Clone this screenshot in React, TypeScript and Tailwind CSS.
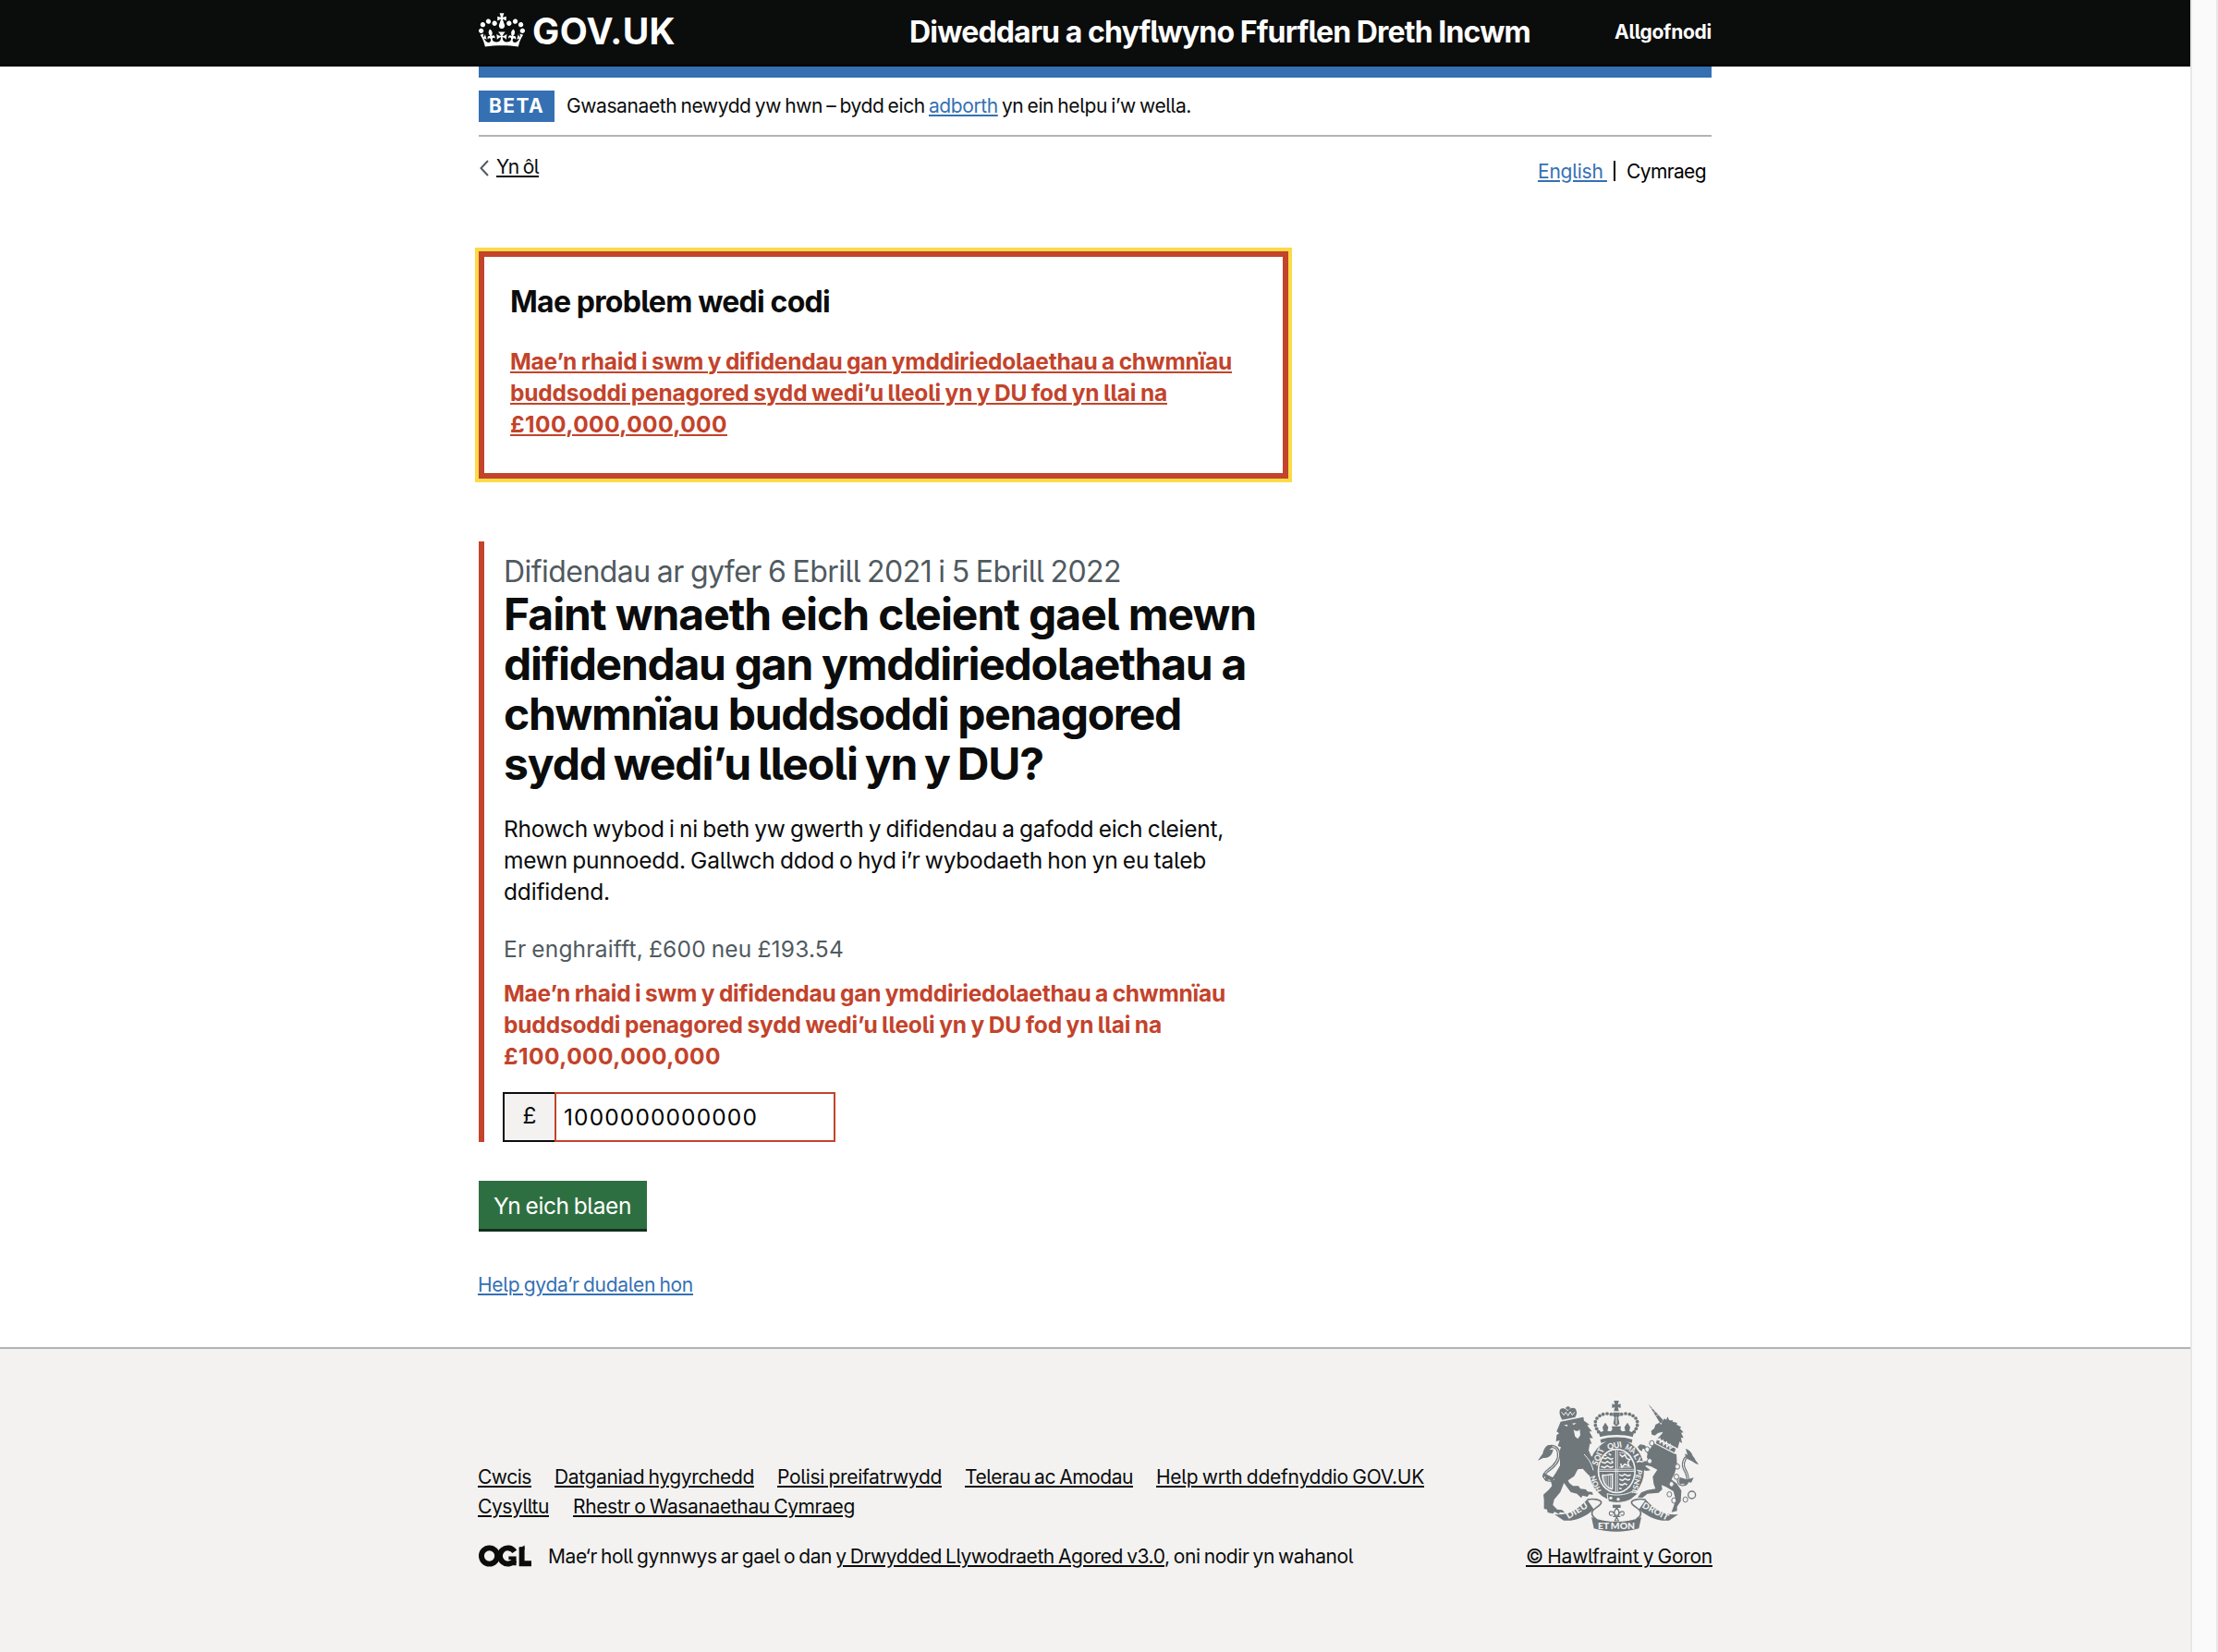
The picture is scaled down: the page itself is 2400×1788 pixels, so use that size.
import { useLayoutEffect, useRef } from "react";
import type { ReactNode } from "react";

/* Single line of text whose letter-spacing is adjusted so the line is `w` pixels wide. */
function Line({ w, className = "", children }: { w: number; className?: string; children: ReactNode }) {
  const ref = useRef<HTMLSpanElement>(null);
  useLayoutEffect(() => {
    const el = ref.current;
    if (!el) return;
    el.style.letterSpacing = "0px";
    const natural = el.getBoundingClientRect().width;
    const count = (el.textContent || "").length;
    el.style.letterSpacing = `${(w - natural) / count}px`;
  }, [w]);
  return (
    <span ref={ref} className={`inline-block whitespace-pre ${className}`}>
      {children}
    </span>
  );
}

function Crown() {
  return (
    <svg viewBox="0 0 132 97" className="h-[37px] w-[50px]" fill="currentColor" aria-hidden="true">
      <path d="M25 30.2c3.5 1.5 7.7-.2 9.1-3.7 1.5-3.6-.2-7.8-3.9-9.2-3.6-1.4-7.6.3-9.1 3.9-1.4 3.5.3 7.5 3.9 9zM9 39.5c3.6 1.5 7.8-.2 9.2-3.7 1.5-3.6-.2-7.8-3.9-9.1-3.6-1.5-7.6.2-9.1 3.8-1.4 3.5.3 7.5 3.8 9zM4.4 57.2c3.5 1.5 7.7-.2 9.1-3.8 1.5-3.6-.2-7.7-3.9-9.1-3.5-1.5-7.6.3-9.1 3.8-1.4 3.5.3 7.6 3.9 9.1zm38.3-21.4c3.5 1.5 7.7-.2 9.1-3.8 1.5-3.6-.2-7.7-3.9-9.1-3.6-1.5-7.6.3-9.1 3.8-1.3 3.6.4 7.7 3.9 9.1zm64.4-5.6c-3.6 1.5-7.8-.2-9.1-3.7-1.5-3.6.2-7.8 3.8-9.2 3.6-1.4 7.7.3 9.2 3.9 1.3 3.5-.4 7.5-3.9 9zm15.9 9.3c-3.6 1.5-7.7-.2-9.1-3.7-1.5-3.6.2-7.8 3.7-9.1 3.6-1.5 7.7.2 9.2 3.8 1.5 3.5-.3 7.5-3.8 9zm4.7 17.7c-3.6 1.5-7.8-.2-9.2-3.8-1.5-3.6.2-7.7 3.9-9.1 3.6-1.5 7.7.3 9.2 3.8 1.3 3.5-.4 7.6-3.9 9.1zM89.3 35.8c-3.6 1.5-7.8-.2-9.2-3.8-1.4-3.6.2-7.7 3.9-9.1 3.6-1.5 7.7.3 9.2 3.8 1.4 3.6-.3 7.7-3.9 9.1zM69.7 17.7l8.9 4.7V9.3l-8.9 2.8c-.2-.3-.5-.6-.9-.9L72.4 0H59.6l3.5 11.2c-.3.3-.6.5-.9.9l-8.8-2.8v13.1l8.8-4.7c.3.3.6.7.9.9l-5 15.4v.1c-.2.8-.4 1.6-.4 2.4 0 4.1 3.1 7.5 7 8.1h.2c.3 0 .7.1 1 .1.4 0 .7 0 1-.1h.2c4-.6 7.1-4.1 7.1-8.1 0-.8-.1-1.7-.4-2.4V34l-5.1-15.4c.4-.2.7-.6 1-.9zM66 92.8c16.9 0 32.8 1.1 47.1 3.2 4-16.9 8.9-26.7 14-33.5l-9.6-3.4c1 4.9 1.1 7.2 0 10.2-1.5-1.4-3-4.3-4.2-8.7L108.6 76c2.8-2 5-3.2 7.5-3.3-4.4 9.4-10 11.9-13.6 11.2-4.3-.8-6.3-4.6-5.6-7.9 1-4.7 5.7-5.9 8-.5 4.3-8.7-3-11.4-7.6-8.8 7.1-7.2 7.9-13.5 2.1-21.1-8 6.1-8.1 12.3-4.5 20.8-4.7-5.4-12.1-2.5-9.5 6.2 3.4-5.2 7.9-2 7.2 3.1-.6 4.3-6.4 7.8-13.5 7.2-10.3-.9-10.9-8-11.2-13.8 2.5-.5 7.1 1.8 11 7.3L80.2 60c-4.1 4.4-8 5.3-12.3 5.4 1.4-4.4 8-11.6 8-11.6H55.5s6.4 7.2 7.9 11.6c-4.2-.1-8-1-12.3-5.4l1.4 16.4c3.9-5.5 8.5-7.7 10.9-7.3-.3 5.8-.9 12.8-11.1 13.8-7.2.6-12.9-2.9-13.5-7.2-.7-5 3.8-8.3 7.1-3.1 2.7-8.7-4.6-11.6-9.4-6.2 3.7-8.5 3.6-14.7-4.6-20.8-5.8 7.6-5 13.9 2.2 21.1-4.7-2.6-11.9.1-7.7 8.8 2.3-5.5 7.1-4.2 8.1.5.7 3.3-1.3 7.1-5.7 7.9-3.5.7-9-1.8-13.5-11.2 2.5.1 4.7 1.3 7.5 3.3l-4.7-15.4c-1.2 4.4-2.7 7.2-4.3 8.7-1.1-3-.9-5.3 0-10.2l-9.5 3.4c5 6.9 9.9 16.7 14 33.5 14.8-2.1 30.8-3.2 47.7-3.2z" />
    </svg>
  );
}

/* Open Government Licence mark: ring, open ring and angle. */
function OglMark() {
  return (
    <svg viewBox="0 0 484 196" className="h-[24px] w-[57px]" fill="none" stroke="#0b0c0c" strokeWidth="50" aria-hidden="true">
      <circle cx="98" cy="98" r="73" />
      <path d="M329 58A73 73 0 1 0 329 138" />
      <path d="M275 118H330V184" strokeWidth="30" />
      <path d="M396 16V168H484" />
      <path d="M371 32L421 0V40H371Z" fill="#0b0c0c" stroke="none" />
    </svg>
  );
}

const ARCH_DOTS: [number, number][] = [
  [370, 122], [357, 120], [344, 122], [333, 127], [324, 135], [319, 146], [319, 158], [323, 169], [329, 179],
  [404, 122], [417, 120], [430, 122], [441, 127], [450, 135], [455, 146], [455, 158], [451, 169], [445, 179],
];

const LINKS: [number, number][] = [
  [502, 216], [487, 236], [495, 274], [585, 292], [582, 325], [566, 349], [559, 382], [574, 402], [611, 399],
];

function RoyalArms() {
  const g = "#6f777b";
  const bg = "#f3f2f1";
  return (
    <svg viewBox="132 78 522 426" className="h-[142px] w-[174px]" fill={g} aria-hidden="true">
      {/* imperial crown */}
      <path d="M379 78h16l-3 13 9-3v14l-9-3 3 13h-16l3-13-9 3V88l9 3z" />
      <path d="M376 116h22v12l-5 3 4 22-10 8-10-8 4-22-5-3z" />
      <path d="M387 130v24" stroke={bg} strokeWidth="3" />
      {ARCH_DOTS.map(([x, y]) => (
        <circle key={`${x}-${y}`} cx={x} cy={y} r="5.6" />
      ))}
      <path d="M327 172l10 8 8-4-3-12 9-15 10 15-3 12 10 2 6-6-2-11h30l-2 11 6 6 10-2-3-12 10-15 9 15-3 12 8 4 10-8-7 24c-32-9-72-9-106 0z" />
      <path d="M335 204c30-10 74-10 104 0l-2 11c-30-9-70-9-100 0z" />

      {/* garter and shield */}
      <ellipse cx="388" cy="303" rx="89" ry="100" />
      <ellipse cx="388" cy="306" rx="62" ry="73" fill={bg} />
      <ellipse cx="388" cy="306" rx="57" ry="68" />
      <path d="M385 238v136M331 307h114" stroke={bg} strokeWidth="3" />
      <path d="M391 238v136M331 301h114" stroke={bg} strokeWidth="2" />
      <g stroke={bg} strokeWidth="4.5" fill="none">
        <path d="M341 262l10 5 8-5 10 6 8-3M338 277l12 4 8-6 10 7 9-4M337 292l12 3 8-6 11 6 9-3" />
        <path d="M347 254l8 3M362 250l8 5M372 272l3 8" />
        <path d="M398 252l8 8 9-6 6 12 10 3-7 9 4 12-14-6-9 10-4-12" />
        <path d="M396 247c20-2 34 8 42 24M396 294h40" strokeWidth="2.5" />
        <path d="M396 318l10 4 8-5 10 5 10-3M397 333l10 4 8-6 9 5 8-3M396 349l10 3 8-5 8 4M396 362l8 2" />
        <path d="M341 318c10 8 22-4 36 0M342 319c0 26 14 42 32 47M374 319v46" />
        <path d="M348 323v19M354 323v29M361 321v36M368 320v41" strokeWidth="2" />
      </g>
      <path d="M357 380c28 8 60 4 78-6l24 4-24 20c-20 12-52 14-74 7z" stroke={bg} strokeWidth="3" />
      <circle cx="369" cy="394" r="5" fill={bg} />
      <circle cx="393" cy="398" r="5" fill={bg} />

      {/* lion */}
      <path d="M203 112c0-12 18-12 26 0 8-14 28-14 28 0 4 8-2 14-4 20l-42 8c-4-8-10-18-8-28z" />
      <path d="M209 115l8 10 6-10 7 12 7-13 7 11 8-10" stroke={bg} strokeWidth="3" fill="none" />
      <path d="M227 96h6v12h-6zM222 100h16v4h-16z" />
      <path d="M206 146l74-15 2 12 18 13-8 2 16 20-9 0 12 22-11-1 7 20-6-2-4 22 8 18 15 14-4 6 4 14-10-6-2 16 8 10-10 4 4 12-14-8-18-20-16 2-12 22-20 14 4 8 12 10 18 0 6 9 18 2 5 7 16 2 2 9-12-2-6 8-16-4-4 8-14-14-20-5-12-16-10-14-12 30-20 24-4 18 14 14 16 2 9 9-17-2-2 6-15-7-5 6-17-4-2-10-10-2 0-30-2-16 18-16 10-12-4-18 16-24 14-24 0-24-5-14 8-22-10-4 6-18-12 3 2-20 8-6-8-6z" />
      <path d="M217 157l12-1-2 6zM243 152l14-2-8 7zM248 172c10 8 18 4 20-2l2 20-8 12-9-8z" fill={bg} />
      <path d="M282 252c14 14 24 28 30 52M266 300l20 24" stroke={bg} strokeWidth="3" fill="none" />
      <path d="M186 334c-34 10-42-16-20-30 20-14 38-34 33-58-4-22-30-26-38-8" fill="none" stroke={g} strokeWidth="10" />
      <path d="M186 334c-34 10-42-16-20-30 20-14 38-34 33-58-4-22-30-26-38-8" fill="none" stroke={bg} strokeWidth="3" />
      <path d="M166 222c-12 6-16 18-18 28l-16 22c10-2 12-8 22-8 20-2 26-16 28-28l-12 2 10-12z" />
      <path d="M150 312l-4 16 12-6-2 18 14-8 8 12 8-14z" />

      {/* unicorn */}
      <path d="M491 89l48 52-10 10z" />
      <path d="M499 103l6 2M507 114l7 1M515 125l8 1" stroke={bg} strokeWidth="2" />
      <path d="M537 144l6-8 6 4 4-10 6 12 12 0-2 4 16 4-3 5 16 9-5 4 12 13-8 1 8 17-8-1 3 18-8-5-6 22-68-30 16-16 4-8-16 4-10 8-10-3-2-12 10-8 4-12z" />
      <path d="M527 152l8-3-2 6z" fill={bg} />
      <path d="M518 200l64 33-5 16-64-32z" stroke={bg} strokeWidth="4" />
      <path d="M520 207l8-6 1 14 9-8 2 15 10-9 1 15 10-8 0 14 9-6" stroke={bg} strokeWidth="4" fill="none" />
      <path d="M508 216L574 250L582 252L584 286L576 314L566 334L584 348L598 370L596 404L584 422L584 436L566 440L574 418L578 394L572 372L548 358L534 352L536 366L524 377L488 380L472 393L456 392L468 376L488 368L514 364L508 348L505 325L520 302L500 292L486 288L480 290L498 304L484 306L468 300L460 288L464 278L484 274L494 276L486 262L488 250L478 234L472 234L470 242L462 238L456 228L464 220L478 222L494 238Z" />
      <path d="M588 330c-4 26 26 26 30 8 6-30-24-38-10-68 10-18 32-8 30 4" fill="none" stroke={g} strokeWidth="10" />
      <path d="M588 330c-4 26 26 26 30 8 6-30-24-38-10-68 10-18 32-8 30 4" fill="none" stroke={bg} strokeWidth="3" />
      <path d="M612 234c16 6 22 16 24 28l18 22c-12 0-16-8-26-12-14-4-18-12-18-22l8 4z" />
      <path d="M592 326l2 24 10-6 8 10 6-12 12 2 8-16-22 6z" />
      {LINKS.map(([x, y]) => (
        <ellipse key={`${x}-${y}`} cx={x} cy={y} rx="7.5" ry="8.5" fill={bg} stroke={g} strokeWidth="3" />
      ))}
      <circle cx="632" cy="384" r="12" fill="none" stroke={g} strokeWidth="4" />

      {/* garter motto */}
      <g fill={bg} className="font-['Lato'] font-black">
        <text transform="translate(325 290) rotate(-67)" textLength="58" lengthAdjust="spacingAndGlyphs" className="text-[27px]">SOIT</text>
        <text transform="translate(359 237) rotate(-10)" textLength="48" lengthAdjust="spacingAndGlyphs" className="text-[27px]">QUI</text>
        <text transform="translate(413 235) rotate(28)" textLength="34" lengthAdjust="spacingAndGlyphs" className="text-[27px]">MA</text>
        <text transform="translate(441 256) rotate(60)" textLength="36" lengthAdjust="spacingAndGlyphs" className="text-[25px]">LY</text>
        <text transform="translate(455 300) rotate(103)" textLength="80" lengthAdjust="spacingAndGlyphs" className="text-[23px]">PENSE</text>
        <text transform="translate(338 371) rotate(-112)" textLength="56" lengthAdjust="spacingAndGlyphs" className="text-[25px]">HON</text>
      </g>

      {/* motto scroll */}
      <path d="M186 447c42 4 74-12 106-48l22 32c-28 24-62 40-98 36z" />
      <path d="M588 447c-42 4-74-12-106-48l-22 32c28 24 62 40 98 36z" />
      <path d="M292 400c20-6 44 0 46 8 0 12-26 18-30 32-2 12 6 18 14 22" fill="none" stroke={g} strokeWidth="5" />
      <path d="M482 400c-20-6-44 0-46 8 0 12 26 18 30 32 2 12-6 18-14 22" fill="none" stroke={g} strokeWidth="5" />
      <path d="M306 456c50 20 112 20 162 0l-8 37c-46 14-100 14-146 0z" />
      <g fill={bg} className="font-['Lato'] font-black">
        <text transform="translate(231 463) rotate(-31)" textLength="76" lengthAdjust="spacingAndGlyphs" className="text-[28px]">DIEU</text>
        <text transform="translate(469 424) rotate(28)" textLength="92" lengthAdjust="spacingAndGlyphs" className="text-[28px]">DROIT</text>
        <text x="327" y="496" textLength="120" lengthAdjust="spacingAndGlyphs" className="text-[28px]">ET MON</text>
      </g>
      <path d="M375 416h26v10h-26z" />
      <path d="M388 426c-8 8-10 16-4 24h8c6-8 4-16-4-24zM382 452c0-14-18-20-18-8 0 8 8 8 10 4M394 452c0-14 18-20 18-8 0 8-8 8-10 4M376 454h24M388 456l-6 12h12z" fill="none" stroke={g} strokeWidth="3.5" />
    </svg>
  );
}

const link = "underline decoration-2 underline-offset-[2px]";

export default function App() {
  return (
    <div className="flex h-[1788px] w-[2400px] bg-white font-['Inter','Liberation_Sans',sans-serif] text-[#0b0c0c] [font-feature-settings:'cv05'] [word-spacing:-0.08em]">
      <div className="flex w-[2370px] flex-col">
        <header className="h-[72px] border-b-2 border-black bg-[#0b0c0c] text-white">
          <div className="mx-auto flex w-[1334px] items-start">
            <div className="flex w-[466px] gap-[8px] pt-[10px]">
              <div className="pt-1"><Crown /></div>
              <Line w={155} className="text-[39px] leading-[48px] font-bold">GOV.UK</Line>
            </div>
            <div className="pt-[15px]">
              <Line w={672} className="text-[32px] leading-[40px] font-bold [word-spacing:-0.01em]">Diweddaru a chyflwyno Ffurflen Dreth Incwm</Line>
            </div>
            <div className="ml-auto pt-[22px]">
              <Line w={105} className="text-[21px] leading-[25px] font-bold">Allgofnodi</Line>
            </div>
          </div>
        </header>

        <div className="mx-auto flex w-[1334px] grow flex-col items-stretch">
          <div className="h-3 bg-[#3570b3]" />
          <div className="flex h-16 items-start border-b-2 border-[#b1b4b6] pt-[14px]">
            <strong className="flex h-[34px] w-[82px] items-start bg-[#3570b3] pt-1 pl-[11px] text-white">
              <Line w={60} className="text-[21px] leading-[25px] font-bold">BETA</Line>
            </strong>
            <Line w={676} className="mt-1 ml-[13px] text-[21px] leading-[25px]">
              Gwasanaeth newydd yw hwn – bydd eich <a className={`text-[#3570b3] ${link}`}>adborth</a> yn ein helpu i’w wella.
            </Line>
          </div>

          <div className="flex items-start justify-between">
            <a className="flex items-start pt-5">
              <svg viewBox="0 0 12 20" className="mt-1 mr-[7px] h-5 w-3" fill="none" stroke="#505a5f" strokeWidth="2">
                <path d="M10 2L2.5 10 10 18" />
              </svg>
              <Line w={46} className={`text-[21px] leading-[25px] ${link}`}>Yn ôl</Line>
            </a>
            <div className="flex items-start pt-[25px] pr-[6px] text-[21px] leading-[25px] text-black">
              <Line w={75} className={`text-[#3570b3] ${link}`}>English </Line>
              <span className="mt-px mr-3 ml-[7px] h-[22px] w-[2px] bg-black" />
              <Line w={86}>Cymraeg</Line>
            </div>
          </div>

          <section className="mt-[74px] h-[246px] w-[876px] border-[6px] border-[#c3432b] pt-[29px] pl-7 shadow-[0_0_0_4px_#fadb47]">
            <h2 className="flex h-[40px] text-[32px] leading-[40px] font-bold [word-spacing:-0.01em]">
              <Line w={346}>Mae problem wedi codi</Line>
            </h2>
            <a className="mt-[27px] flex flex-col items-start text-[24.5px] leading-[34px] font-bold text-[#c3432b] [word-spacing:-0.04em]">
              <Line w={781} className={link}>Mae’n rhaid i swm y difidendau gan ymddiriedolaethau a chwmnïau</Line>
              <Line w={711} className={link}>buddsoddi penagored sydd wedi’u lleoli yn y DU fod yn llai na</Line>
              <Line w={235} className={link}>£100,000,000,000</Line>
            </a>
          </section>

          <section className="mt-[68px] h-[650px] border-l-[6px] border-[#c3432b] pt-[13px] pl-[21px]">
            <p className="h-[39px] text-[32px] leading-[40px] text-[#505a5f]">
              <Line w={668}>Difidendau ar gyfer 6 Ebrill 2021 i 5 Ebrill 2022</Line>
            </p>
            <h1 className="flex flex-col items-start text-[48px] leading-[54px] font-bold [word-spacing:0em]">
              <Line w={814}>Faint wnaeth eich cleient gael mewn</Line>
              <Line w={803}>difidendau gan ymddiriedolaethau a</Line>
              <Line w={733}>chwmnïau buddsoddi penagored</Line>
              <Line w={584} className="[word-spacing:-0.05em]">sydd wedi’u lleoli yn y DU?</Line>
            </h1>
            <p className="mt-[26px] flex flex-col items-start text-[24.5px] leading-[34px]">
              <Line w={779}>Rhowch wybod i ni beth yw gwerth y difidendau a gafodd eich cleient,</Line>
              <Line w={760}>mewn punnoedd. Gallwch ddod o hyd i’r wybodaeth hon yn eu taleb</Line>
              <Line w={115}>ddifidend.</Line>
            </p>
            <p className="mt-7 flex text-[24.5px] leading-[34px] text-[#505a5f]">
              <Line w={368}>Er enghraifft, £600 neu £193.54</Line>
            </p>
            <p className="mt-[14px] flex flex-col items-start text-[24.5px] leading-[34px] font-bold text-[#c3432b] [word-spacing:-0.04em]">
              <Line w={781}>Mae’n rhaid i swm y difidendau gan ymddiriedolaethau a chwmnïau</Line>
              <Line w={712}>buddsoddi penagored sydd wedi’u lleoli yn y DU fod yn llai na</Line>
              <Line w={235}>£100,000,000,000</Line>
            </p>
            <div className="mt-[22px] -ml-px flex h-[54px]">
              <div className="flex w-[56px] items-center justify-center border-2 border-r-0 border-[#0b0c0c] bg-[#f3f2f1] pb-1 text-[24.5px] leading-[34px]">£</div>
              <div className="flex w-[304px] items-center border-2 border-[#c3432b] bg-white pl-2 text-[24.5px] leading-[34px] text-black">
                <Line w={210}>1000000000000</Line>
              </div>
            </div>
          </section>

          <div className="mt-[42px] flex h-[52px] w-[182px] bg-[#2e6f41] pt-[10px] pl-4 text-[24.5px] leading-[34px] text-white shadow-[0_3px_0_#14301f]">
            <Line w={149}>Yn eich blaen</Line>
          </div>
          <a className="mt-12 -ml-px flex text-[21px] leading-[25px] text-[#3570b3]">
            <Line w={233} className={link}>Help gyda’r dudalen hon</Line>
          </a>
        </div>

        <footer className="h-[330px] border-t-2 border-[#b1b4b6] bg-[#f3f2f1]">
          <div className="mx-auto flex h-[260px] w-[1334px] justify-between text-[21px] leading-[25px]">
            <div className="flex flex-col pt-[126px]">
              <div className="-ml-px flex h-8 gap-[25px]">
                <Line w={58} className={link}>Cwcis</Line>
                <Line w={216} className={link}>Datganiad hygyrchedd</Line>
                <Line w={178} className={link}>Polisi preifatrwydd</Line>
                <Line w={182} className={link}>Telerau ac Amodau</Line>
                <Line w={290} className={link}>Help wrth ddefnyddio GOV.UK</Line>
              </div>
              <div className="-ml-px flex h-8 gap-[26px]">
                <Line w={77} className={link}>Cysylltu</Line>
                <Line w={305} className={link}>Rhestr o Wasanaethau Cymraeg</Line>
              </div>
              <div className="mt-[22px] flex gap-[18px]">
                <OglMark />
                <Line w={871}>
                  Mae‘r holl gynnwys ar gael o dan <a className={link}>y Drwydded Llywodraeth Agored v3.0</a>, oni nodir yn wahanol
                </Line>
              </div>
            </div>
            <div className="flex flex-col items-end pt-14">
              <div className="mr-[14px]"><RoyalArms /></div>
              <Line w={202} className={`mt-[14px] -mr-px ${link}`}>© Hawlfraint y Goron</Line>
            </div>
          </div>
        </footer>
      </div>
      <div className="w-[30px] border-r-2 border-l-2 border-[#e7e7e7] bg-[#fafafa]" />
    </div>
  );
}
